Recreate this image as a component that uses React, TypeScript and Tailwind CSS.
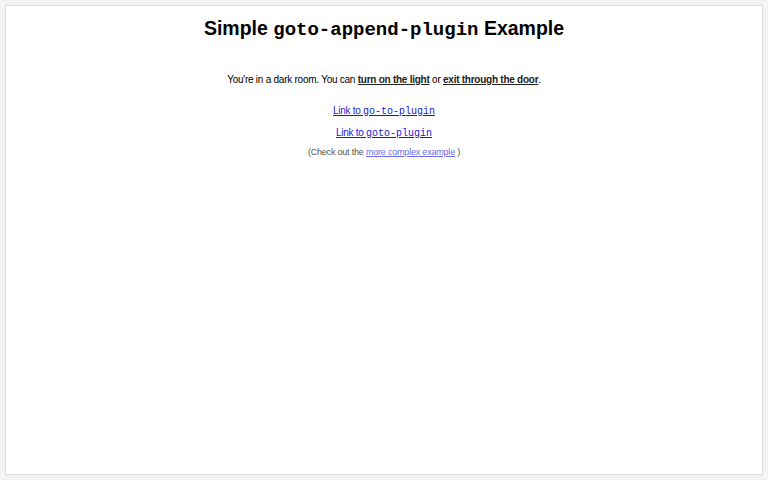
import React from 'react';

const mono = "font-['Liberation_Mono',monospace]";

const App = () => {
  return (
    <div className="h-[480px] w-[768px] bg-[#f3f3f3] p-[5px] font-['Liberation_Sans',Arial,sans-serif]">
      <div className="flex h-[470px] flex-col items-center border border-[#dcdcdc] bg-white">
        <h1 className="mt-[8px] text-[19.5px] font-bold leading-[28px] text-black">
          Simple <code className={`${mono} text-[19px]`}>goto-append-plugin</code> Example
        </h1>

        <p className="mt-[29px] text-[10px] leading-[14px] tracking-[-0.25px] text-black">
          You're in a dark room. You can{' '}
          <a href="#" className="font-bold text-[#222] underline">turn on the light</a> or{' '}
          <a href="#" className="font-bold text-[#222] underline">exit through the door</a>.
        </p>

        <a href="#" className="mt-[17px] text-[10px] leading-[14px] tracking-[-0.3px] text-[#1a1ad6] underline">
          Link to <code className={`${mono} text-[10px] tracking-normal`}>go-to-plugin</code>
        </a>
        <a href="#" className="mt-[7px] text-[10px] leading-[14px] tracking-[-0.3px] text-[#1a1ad6] underline">
          Link to <code className={`${mono} text-[10px] tracking-normal`}>goto-plugin</code>
        </a>

        <p className="mt-[5px] text-[9px] leading-[12px] tracking-[-0.2px] text-[#555]">
          (Check out the{' '}
          <a href="#" className="text-[#6b6be8] underline">more complex example</a> )
        </p>
      </div>
    </div>
  );
};

export default App;
